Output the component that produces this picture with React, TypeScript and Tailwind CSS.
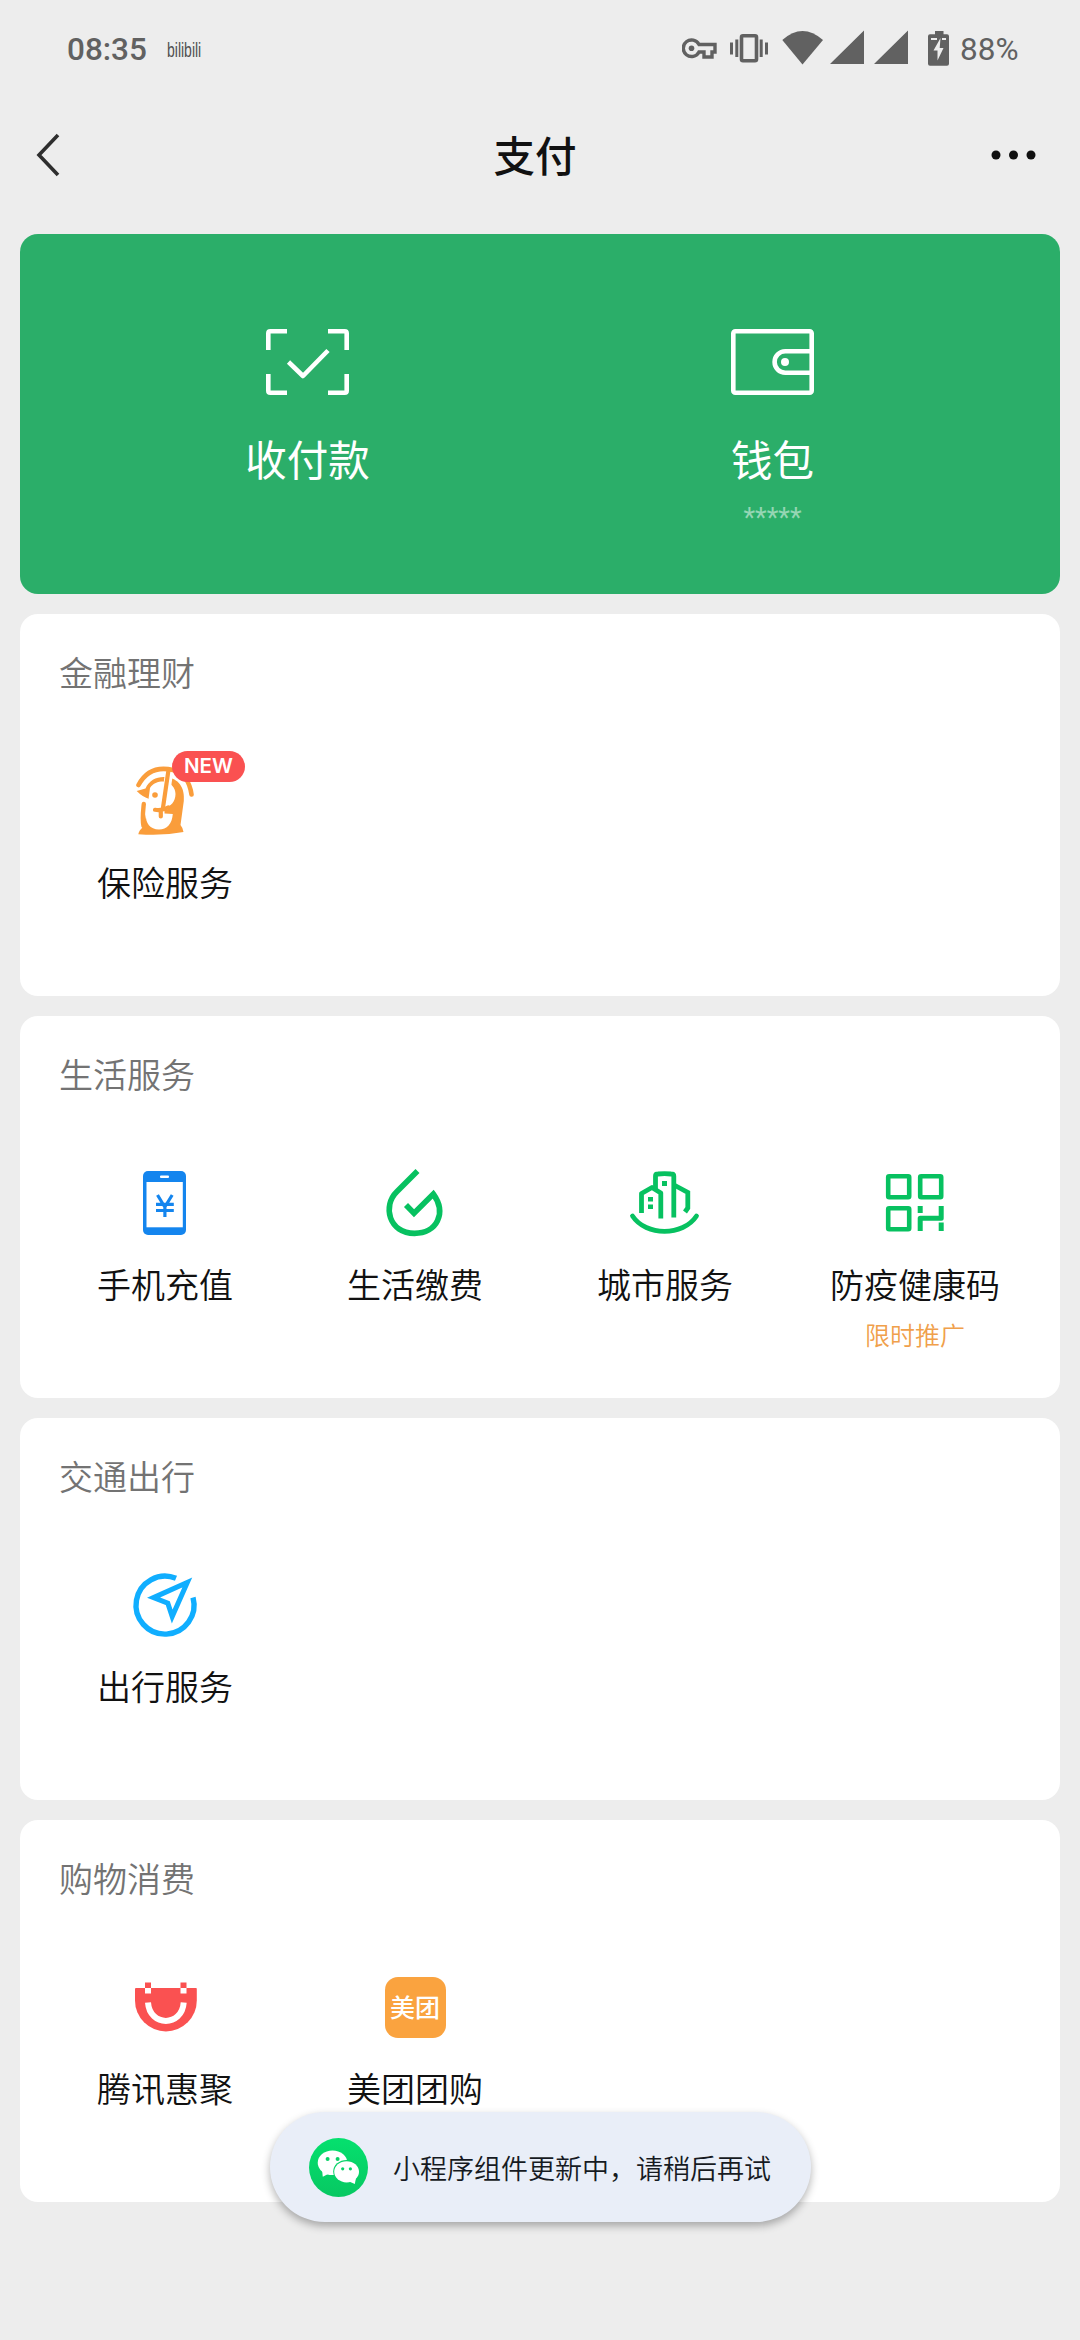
import type { ReactNode } from "react"

interface ServiceItem {
  label: string
  icon: ReactNode
  badge?: string
  note?: string
}

interface ServiceGroup {
  title: string
  items: ServiceItem[]
}

function InsuranceIcon() {
  return (
    <svg width="80" height="80" viewBox="0 0 80 80" fill="none">
      <path
        d="M11.7 30 L20.5 27.5 C24 19 32 15.5 40 16 C54 17 60 27 58.8 40 L55.5 64 Q58 67 58.5 71 Q38 75 13.3 73.2 Q14 69 18.5 66 L24 38 Q17 35.5 11.7 30Z"
        fill="#fa9d3b"
      />
      <path
        d="M25 27 C28 22 33 20.5 38 20.5 C46 21 50.5 27 50.5 33 C50.5 41 45.5 45.5 39.5 46.5 L39.5 52.5 L47.8 53 C47 63 42 68.5 34 68.5 C25 68.5 20.5 62 21 54 L20.5 42 L14 43 L14 36 L23.5 38Z"
        fill="#fff"
      />
      <path d="M18.8 43 C18 51 17 58 18.5 65" stroke="#fa9d3b" strokeWidth="4.4" strokeLinecap="round" />
      <path d="M44 12 L39 48" stroke="#fff" strokeWidth="8" />
      <path d="M13.5 24 C21 10 33 5.5 48 9 C59 12 65 22 66.5 33.5" stroke="#fa9d3b" strokeWidth="4.6" strokeLinecap="round" />
      <path d="M43.5 9 L37.5 50" stroke="#fa9d3b" strokeWidth="4.2" />
      <path d="M30 48.8 Q37 50 43 46.5 M35.8 50 L35.8 55.5" stroke="#fa9d3b" strokeWidth="4.2" strokeLinecap="round" />
      <circle cx="30" cy="34" r="2.8" fill="#fa9d3b" />
    </svg>
  )
}

function PhoneIcon() {
  return (
    <svg width="80" height="80" viewBox="0 0 80 80" fill="none">
      <rect x="18" y="8" width="43" height="64" rx="5" fill="#1485ee" />
      <rect x="21.5" y="19" width="36.3" height="45.3" fill="#fff" />
      <rect x="35" y="12.5" width="9" height="2.6" rx="1" fill="#fff" />
      <path d="M32.5 32 L39.8 44 L47.2 32 M31 41.3 H48.8 M31 47.5 H48.8 M39.9 42 V54" stroke="#1485ee" strokeWidth="3.2" />
    </svg>
  )
}

function UtilityIcon() {
  return (
    <svg width="80" height="80" viewBox="0 0 80 80" fill="none">
      <path
        d="M42.5 8 L22 28.5 C7 43 14 70.4 39.5 70.4 C62 70.4 72 50 58.3 31 L39 50.3 L31 42"
        stroke="#07c160"
        strokeWidth="5.6"
      />
    </svg>
  )
}

function CityIcon() {
  return (
    <svg width="80" height="80" viewBox="0 0 80 80" fill="none" stroke="#07c160" strokeWidth="4.8">
      <path d="M7.5 53 C21 73.5 58 73.5 71.5 53" strokeLinecap="round" />
      <path d="M16.5 50 V30.5 L27 24.5 L35.8 30 V55.5" strokeLinejoin="round" />
      <path d="M30.5 27 V13 Q30.5 11 33 11 Q39.5 10.2 46 11 Q48.8 11 48.8 13 V54.5" />
      <path d="M50 22.5 L62.8 29.5 V45 L60 49" />
      <path d="M39.5 18 V23 M25.5 34 V38.5 M25.5 41.5 V46" strokeWidth="5" />
    </svg>
  )
}

function HealthCodeIcon() {
  return (
    <svg width="80" height="80" viewBox="0 0 80 80" fill="none" stroke="#07c160" strokeWidth="4.6">
      <rect x="13.2" y="13.2" width="21" height="21" rx="1" />
      <rect x="45.2" y="13.2" width="21" height="21" rx="1" />
      <rect x="13.2" y="45.2" width="21" height="21" rx="1" />
      <path d="M45.2 43 V50 M45.2 68 V55.2 H66.2 V43 M66.2 59.5 V68" strokeWidth="5" strokeLinejoin="round" />
    </svg>
  )
}

function TravelIcon() {
  return (
    <svg width="80" height="80" viewBox="0 0 80 80" fill="none" stroke="#10aeff" strokeWidth="5.4">
      <path d="M51 13.3 A29 29 0 1 0 68 32.5" />
      <path d="M28.5 32.6 L62.3 17.5 L47.2 51.5 L42.8 38.2Z" strokeWidth="5" strokeMiterlimit="3" />
    </svg>
  )
}

function BagIcon() {
  return (
    <svg width="80" height="80" viewBox="0 0 80 80">
      <path d="M10 22 Q10 21 11 21 H71 Q71.8 21 71.8 22 V33.5 A30.9 30.9 0 0 1 10 33.5Z" fill="#fa5151" />
      <path d="M20 15.5 h6 v5.5 h-6z M55.5 15.5 h6 v5.5 h-6z" fill="#fa5151" />
      <path d="M20 21 h6 v5.5 h-6z M55.5 21 h6 v5.5 h-6z" fill="#fff" />
      <path d="M23 35.5 C24.7 60 57 60 58.7 35.5" fill="none" stroke="#fff" strokeWidth="6" />
    </svg>
  )
}

function MeituanIcon() {
  return (
    <div className="flex h-20 w-20 items-center justify-center">
      <div className="flex h-[61px] w-[61px] items-center justify-center rounded-[13px] bg-[#faa33f] pb-[2px] text-[25px] leading-none font-medium text-white">
        美团
      </div>
    </div>
  )
}

function WechatIcon() {
  return (
    <svg width="59" height="59" viewBox="0 0 59 59">
      <defs>
        <linearGradient id="wechat" x1="0" y1="0" x2="0" y2="1">
          <stop offset="0" stopColor="#05e06e" />
          <stop offset="1" stopColor="#07c862" />
        </linearGradient>
      </defs>
      <circle cx="29.5" cy="29.5" r="29.5" fill="url(#wechat)" />
      <path d="M13 32 L13.8 38.8 L21 35Z" fill="#fff" />
      <ellipse cx="23.5" cy="24.8" rx="14.8" ry="12.3" fill="#fff" />
      <ellipse cx="37.6" cy="33.6" rx="13.4" ry="11.7" fill="#07d267" />
      <path d="M47 40 L45.8 46 L39 43Z" fill="#fff" />
      <ellipse cx="37.6" cy="33.8" rx="12.4" ry="10.6" fill="#fff" />
      <g fill="#07d267">
        <circle cx="18.6" cy="21" r="2" />
        <circle cx="28.6" cy="21" r="2" />
        <circle cx="33.7" cy="30.8" r="1.6" />
        <circle cx="41.4" cy="30.8" r="1.6" />
      </g>
    </svg>
  )
}

const groups: ServiceGroup[] = [
  {
    title: "金融理财",
    items: [{ label: "保险服务", icon: <InsuranceIcon />, badge: "NEW" }],
  },
  {
    title: "生活服务",
    items: [
      { label: "手机充值", icon: <PhoneIcon /> },
      { label: "生活缴费", icon: <UtilityIcon /> },
      { label: "城市服务", icon: <CityIcon /> },
      { label: "防疫健康码", icon: <HealthCodeIcon />, note: "限时推广" },
    ],
  },
  {
    title: "交通出行",
    items: [{ label: "出行服务", icon: <TravelIcon /> }],
  },
  {
    title: "购物消费",
    items: [
      { label: "腾讯惠聚", icon: <BagIcon /> },
      { label: "美团团购", icon: <MeituanIcon /> },
    ],
  },
]

function StatusBar() {
  return (
    <div className="flex h-[98px] items-center pt-[1px] pr-[61px] pl-[67px] font-['Roboto',sans-serif] text-[31.5px] leading-none text-[#616161]">
      <span className="w-[79px] font-medium">08:35</span>
      <span className="ml-[21px] w-[35px] scale-y-[1.4] font-['Liberation_Sans',sans-serif] text-[14px] text-[#505050]">bilibili</span>
      <svg className="ml-auto" width="268" height="40" viewBox="681 29.5 268 40" fill="none">
        {/* vpn key */}
        <path
          d="M698 44 A8.3 8.3 0 1 0 698 51.5 H703 V56.5 H711 V51.5 H714 V44Z"
          stroke="#616161"
          strokeWidth="3.4"
        />
        <circle cx="690.5" cy="47.7" r="2.8" fill="#616161" />
        {/* vibrate */}
        <rect x="740.5" y="35.3" width="15" height="25" rx="1.5" stroke="#616161" strokeWidth="3.6" />
        <path d="M730.5 42 V54 M735.8 39 V56.5 M760.2 39 V56.5 M765.5 42 V54" stroke="#616161" strokeWidth="3" />
        <path d="M781.3 39.5 Q801.5 21.5 822 39.5 L801.5 64Z" fill="#616161" />
        <path d="M863 30 V63.5 H829Z M907 30 V63.5 H873Z" fill="#616161" />
        <path d="M934 30.5 h8.5 v3.3 h3.5 q2 0 2 2 v27.5 q0 2 -2 2 h-17 q-2 0 -2 -2 v-27.5 q0 -2 2 -2 h5z" fill="#616161" />
        <path d="M939.5 37.5 L932.5 50 H936.5 V60 L942.5 47.5 H938.7Z M930 37.5 h6 v2 h-6z M941 37.5 h4 v2 h-4z" fill="#ededed" />
      </svg>
      <span className="ml-[10px] w-[59px]">88%</span>
    </div>
  )
}

function NavBar() {
  return (
    <div className="flex h-[136px] items-center justify-between pr-[43px] pb-[23px] pl-[36px]">
      <svg width="50" height="44" viewBox="0 0 50 44" fill="none">
        <path d="M22 2 L3 22 L22 42" stroke="#2e2e2e" strokeWidth="3.6" />
      </svg>
      <h1 className="mr-[7px] text-[41.5px] leading-none font-medium text-[#111]">支付</h1>
      <svg width="46" height="10" viewBox="0 0 46 10" fill="#111">
        <circle cx="5" cy="5" r="4.5" />
        <circle cx="22.5" cy="5" r="4.5" />
        <circle cx="40" cy="5" r="4.5" />
      </svg>
    </div>
  )
}

function PayPanel() {
  return (
    <div className="grid h-[360px] grid-cols-2 rounded-[18px] bg-[#2bae69] px-[55px] pt-[95px] text-white">
      <div className="flex flex-col items-center">
        <svg width="83" height="66" viewBox="0 0 83 66" fill="none" stroke="#fff" strokeWidth="4.6">
          <path d="M2.3 21 V4.3 Q2.3 2.3 4.3 2.3 H21 M62 2.3 H78.7 Q80.7 2.3 80.7 4.3 V21 M80.7 45 V61.7 Q80.7 63.7 78.7 63.7 H62 M21 63.7 H4.3 Q2.3 63.7 2.3 61.7 V45" />
          <path d="M22.5 33 L37 47 L62 21.5" strokeLinejoin="round" />
        </svg>
        <span className="mt-[38px] text-[41.5px] leading-[50px]">收付款</span>
      </div>
      <div className="flex flex-col items-center">
        <svg width="83" height="66" viewBox="0 0 83 66" fill="none" stroke="#fff" strokeWidth="4.6">
          <rect x="2.3" y="2.3" width="78.4" height="61.4" rx="2" />
          <path d="M80.7 22.3 H54.3 A10.7 10.7 0 0 0 54.3 43.7 H80.7" />
          <circle cx="54" cy="33" r="4" fill="#fff" stroke="none" />
        </svg>
        <span className="mt-[38px] text-[41.5px] leading-[50px]">钱包</span>
        <span className="mt-[18px] font-['Roboto',sans-serif] text-[27px] leading-[34px] text-white/50">*****</span>
      </div>
    </div>
  )
}

function ServiceCard({ group }: { group: ServiceGroup }) {
  return (
    <section className="h-[382px] rounded-[18px] bg-white px-[20px] pt-[38px]">
      <h2 className="pl-[19px] text-[34px] leading-[40px] font-[350] text-[#737373]">{group.title}</h2>
      <div className="mt-[69px] grid grid-cols-4">
        {group.items.map((item) => (
          <div key={item.label} className="flex flex-col items-center">
            <div className="relative">
              {item.icon}
              {item.badge && (
                <span className="absolute top-[-10px] left-[47px] flex h-[31px] w-[73px] items-center justify-center rounded-full bg-[#fa5151] font-['Inter',sans-serif] text-[20.5px] font-semibold text-white">
                  {item.badge}
                </span>
              )}
            </div>
            <span className="mt-[21px] text-[34px] leading-[40px] font-[350] whitespace-nowrap text-[#111]">{item.label}</span>
            {item.note && <span className="mt-[14px] text-[25px] leading-[32px] font-[350] text-[#f0a04b]">{item.note}</span>}
          </div>
        ))}
      </div>
    </section>
  )
}

export default function App() {
  return (
    <div className="relative h-[2340px] w-[1080px] overflow-hidden bg-[#ededed] font-['Noto_Sans_CJK_SC',sans-serif]">
      <StatusBar />
      <NavBar />
      <main className="flex flex-col gap-5 px-5">
        <PayPanel />
        {groups.map((group) => (
          <ServiceCard key={group.title} group={group} />
        ))}
      </main>

      <div className="absolute top-[2112px] left-[270px] flex h-[110px] w-[541px] items-center rounded-full bg-[#e9eef8] pl-[39px] shadow-[0_4px_8px_rgba(0,0,0,0.3)]">
        <WechatIcon />
        <span className="ml-[25px] text-[27px] leading-none font-[350] whitespace-nowrap text-[#161a22]">
          小程序组件更新中，请稍后再试
        </span>
      </div>
    </div>
  )
}
